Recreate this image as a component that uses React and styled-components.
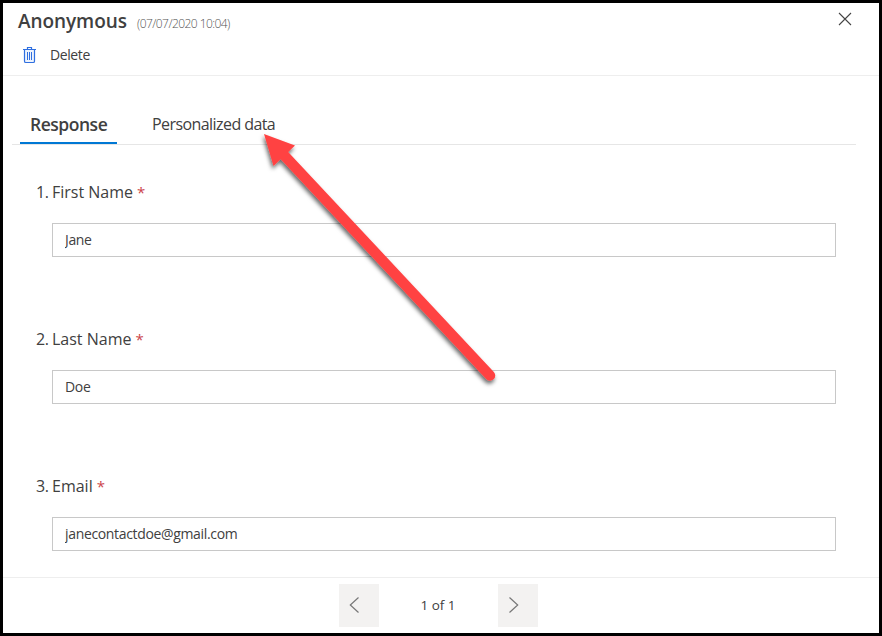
import React from "react";
import styled, { createGlobalStyle } from "styled-components";

const GlobalStyle = createGlobalStyle`
  * { box-sizing: border-box; }
  body { margin: 0; font-family: "Open Sans", "Noto Sans", sans-serif; color: #404040; }
  button, input { font: inherit; color: inherit; }
`;

const Panel = styled.div`
  position: relative;
  display: flex;
  flex-direction: column;
  width: 882px;
  height: 636px;
  border: 3px solid #000;
  background: #fff;
  overflow: hidden;
`;

const Header = styled.header`
  height: 73px;
  flex: none;
  border-bottom: 1px solid #eee;
`;

const TitleRow = styled.div`
  display: flex;
  align-items: center;
  height: 36px;
  padding: 0 27px 0 15px;
`;

const Title = styled.h1`
  width: 119px;
  margin: 0;
  font-size: 19px;
  font-weight: 600;
  line-height: 36px;
  letter-spacing: -0.07px;
  white-space: nowrap;
`;

const Timestamp = styled.span`
  font-size: 12px;
  font-weight: 300;
  line-height: 36px;
  letter-spacing: -0.56px;
  color: #555;
  padding-top: 5px;
  white-space: nowrap;
`;

const CloseButton = styled.button`
  display: flex;
  margin: -5px 0 0 auto;
  padding: 0;
  border: 0;
  background: none;
`;

const DeleteButton = styled.button`
  display: flex;
  align-items: center;
  gap: 13px;
  height: 30px;
  margin: 0 0 0 19px;
  padding: 0;
  border: 0;
  background: none;
  font-size: 14px;
  letter-spacing: -0.4px;

  svg { margin-top: 2px; }
`;

const Body = styled.main`
  flex: none;
  height: 501px;
  padding: 26px 23px 0 9px;
`;

const Tabs = styled.nav`
  display: flex;
  height: 43px;
  padding-left: 8px;
  border-bottom: 1px solid #e6e6e6;
`;

const Tab = styled.button`
  height: 42px;
  padding: 3px 10px 0;
  border: 0;
  border-bottom: 2px solid ${(p) => (p.$active ? "#0078d4" : "transparent")};
  background: none;
  text-align: left;
  white-space: nowrap;
  width: ${(p) => (p.$active ? "97px" : "150px")};
  margin-right: 25px;
  font-size: ${(p) => (p.$active ? "17.5px" : "16px")};
  font-weight: ${(p) => (p.$active ? 600 : 400)};
  letter-spacing: ${(p) => (p.$active ? "-0.48px" : "-0.57px")};
`;

const Questions = styled.div`
  padding: 35px 20px 0 24px;
`;

const Question = styled.section`
  height: 147px;
`;

const Label = styled.label`
  display: flex;
  height: 24px;
  margin-bottom: 19px;
  font-size: 16px;
  line-height: 24px;
  white-space: nowrap;
`;

const Num = styled.span`
  width: 16px;
  letter-spacing: -0.5px;
`;

const Required = styled.span`
  margin-left: 4px;
  font-size: 15px;
  color: #cc444a;
`;

const Field = styled.input`
  display: block;
  width: 784px;
  height: 34px;
  margin-left: 16px;
  padding: 0 12px 2px;
  border: 1px solid #c8c8c8;
  border-radius: 0;
  outline: 0;
  background: #fff;
  font-size: 14px;
  letter-spacing: -0.34px;
`;

const Footer = styled.footer`
  display: flex;
  height: 56px;
  padding: 6px 0 0 336px;
  border-top: 1px solid #eee;
`;

const PageButton = styled.button`
  display: flex;
  align-items: center;
  width: 40px;
  height: 43px;
  padding: 0 0 2px 10px;
  border: 0;
  background: #f3f2f1;
`;

const PageCount = styled.span`
  width: 119px;
  padding-right: 1px;
  line-height: 42px;
  text-align: center;
  font-size: 13.5px;
`;

const Pointer = styled.svg`
  position: absolute;
  left: -3px;
  top: -3px;
  pointer-events: none;
`;

const TrashIcon = () => (
  <svg width="15" height="18" viewBox="0 0 15 18" fill="none" stroke="#2f6fe0">
    <path d="M2.5 4v11.2q0 1.3 1.3 1.3h7.4q1.3 0 1.3-1.3V4" fill="#edf3fd" strokeWidth="1.2" />
    <path d="M1 3.5h13M5.5 3V1.5h4V3" strokeWidth="1.2" />
    <path d="M5.5 6v8M7.5 6v8M9.5 6v8" />
  </svg>
);

const CloseIcon = () => (
  <svg width="14" height="14" viewBox="0 0 14 14" fill="none" stroke="#444" strokeWidth="1.1">
    <path d="M1 1l12 12M13 1L1 13" />
  </svg>
);

const Chevron = ({ next }) => (
  <svg width="12" height="18" viewBox="0 0 12 18" fill="none" stroke="#777" strokeWidth="1.2">
    <path d={next ? "M1.5 1.5l8.2 7.5-8.2 7.5" : "M9.5 1.5L1.3 9l8.2 7.5"} />
  </svg>
);

const questions = [
  { name: "First Name", value: "Jane" },
  { name: "Last Name", value: "Doe" },
  { name: "Email", value: "janecontactdoe@gmail.com" },
];

export default function App() {
  return (
    <Panel>
      <GlobalStyle />
      <Header>
        <TitleRow>
          <Title>Anonymous</Title>
          <Timestamp>(07/07/2020 10:04)</Timestamp>
          <CloseButton aria-label="Close"><CloseIcon /></CloseButton>
        </TitleRow>
        <DeleteButton><TrashIcon />Delete</DeleteButton>
      </Header>
      <Body>
        <Tabs>
          <Tab $active>Response</Tab>
          <Tab>Personalized data</Tab>
        </Tabs>
        <Questions>
          {questions.map((q, i) => (
            <Question key={q.name}>
              <Label htmlFor={`q${i}`}>
                <Num>{i + 1}.</Num>{q.name}<Required>*</Required>
              </Label>
              <Field id={`q${i}`} defaultValue={q.value} />
            </Question>
          ))}
        </Questions>
      </Body>
      <Footer>
        <PageButton aria-label="Previous"><Chevron /></PageButton>
        <PageCount>1 of 1</PageCount>
        <PageButton aria-label="Next"><Chevron next /></PageButton>
      </Footer>
      <Pointer width="882" height="636" viewBox="0 0 882 636">
        <defs>
          <filter id="shadow" x="-20%" y="-20%" width="140%" height="140%">
            <feDropShadow dx="-1" dy="3" stdDeviation="2" floodColor="#000" floodOpacity="0.6" />
          </filter>
        </defs>
        <g filter="url(#shadow)" fill="#ff4343">
          <path d="M264 134L295 145.5L273.5 166Z" />
          <path d="M282 153L490 375.5" stroke="#ff4343" strokeWidth="10.5" strokeLinecap="round" />
        </g>
      </Pointer>
    </Panel>
  );
}
